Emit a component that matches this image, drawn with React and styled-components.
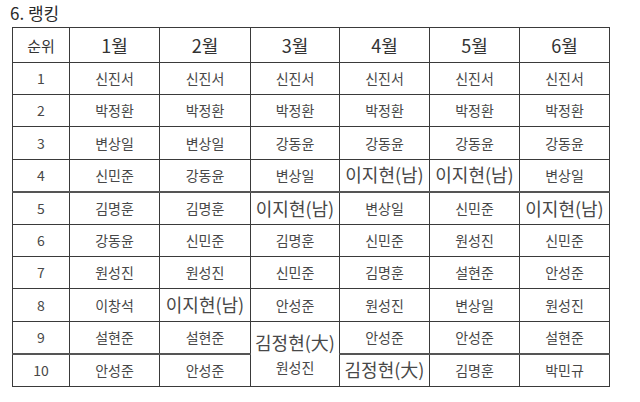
import { createGlobalStyle } from "styled-components";
import styled from "styled-components";

const GlobalStyle = createGlobalStyle`
  body {
    margin: 0;
    background: #fff;
    font-family: "Noto Sans CJK KR", "Noto Sans", sans-serif;
    color: #333;
  }
`;

const Page = styled.div`
  padding: 2px 0 0 12px;
`;

const Title = styled.h3`
  margin: 0 0 0 -2px;
  height: 25px;
  font-size: 17px;
  font-weight: 400;
  line-height: 22px;
  color: #2a2a2a;
`;

const Table = styled.table`
  border-collapse: collapse;
  table-layout: fixed;
  width: 598px;
`;

const HeadCell = styled.th`
  height: 34px;
  padding: 0;
  border: 1px solid #3a3a3a;
  font-weight: 400;
  font-size: ${(p) => (p.$small ? "15px" : "18px")};
  color: #333;
  text-align: center;
`;

const Cell = styled.td`
  height: 31.2px;
  padding: 0;
  border: 1px solid #3a3a3a;
  border-bottom-width: ${(p) => (p.$thick ? "2px" : "1px")};
  border-bottom-color: ${(p) => (p.$thick ? "#555" : "#3a3a3a")};
  font-size: ${(p) => (p.$big ? "18px" : "14px")};
  line-height: 1.2;
  color: #484848;
  text-align: center;
  white-space: nowrap;
`;

const Line = styled.div`
  font-size: ${(p) => (p.$big ? "18px" : "14px")};
  line-height: ${(p) => (p.$big ? "26px" : "24px")};
`;

const widths = [57, 90, 91, 89, 90, 90, 90];
const months = ["1월", "2월", "3월", "4월", "5월", "6월"];

const big = (name) => ({ name, big: true });

const rows = [
  ["신진서", "신진서", "신진서", "신진서", "신진서", "신진서"],
  ["박정환", "박정환", "박정환", "박정환", "박정환", "박정환"],
  ["변상일", "변상일", "강동윤", "강동윤", "강동윤", "강동윤"],
  ["신민준", "강동윤", "변상일", big("이지현(남)"), big("이지현(남)"), "변상일"],
  ["김명훈", "김명훈", big("이지현(남)"), "변상일", "신민준", big("이지현(남)")],
  ["강동윤", "신민준", "김명훈", "신민준", "원성진", "신민준"],
  ["원성진", "원성진", "신민준", "김명훈", "설현준", "안성준"],
  ["이창석", big("이지현(남)"), "안성준", "원성진", "변상일", "원성진"],
  ["설현준", "설현준", { stack: true }, "안성준", "안성준", "설현준"],
  ["안성준", "안성준", null, big("김정현(大)"), "김명훈", "박민규"],
];

const thickAfter = [4, 9];

export default function App() {
  return (
    <Page>
      <GlobalStyle />
      <Title>6. 랭킹</Title>
      <Table>
        <colgroup>
          {widths.map((w, i) => (
            <col key={i} style={{ width: w }} />
          ))}
        </colgroup>
        <thead>
          <tr>
            <HeadCell $small>순위</HeadCell>
            {months.map((m) => (
              <HeadCell key={m}>{m}</HeadCell>
            ))}
          </tr>
        </thead>
        <tbody>
          {rows.map((row, r) => {
            const thick = thickAfter.includes(r + 1);
            return (
              <tr key={r}>
                <Cell $thick={thick}>{r + 1}</Cell>
                {row.map((c, i) => {
                  if (c === null) return null;
                  if (typeof c === "string")
                    return (
                      <Cell key={i} $thick={thick}>
                        {c}
                      </Cell>
                    );
                  if (c.stack)
                    return (
                      <Cell key={i} rowSpan={2}>
                        <Line $big>김정현(大)</Line>
                        <Line>원성진</Line>
                      </Cell>
                    );
                  return (
                    <Cell key={i} $big $thick={thick}>
                      {c.name}
                    </Cell>
                  );
                })}
              </tr>
            );
          })}
        </tbody>
      </Table>
    </Page>
  );
}
